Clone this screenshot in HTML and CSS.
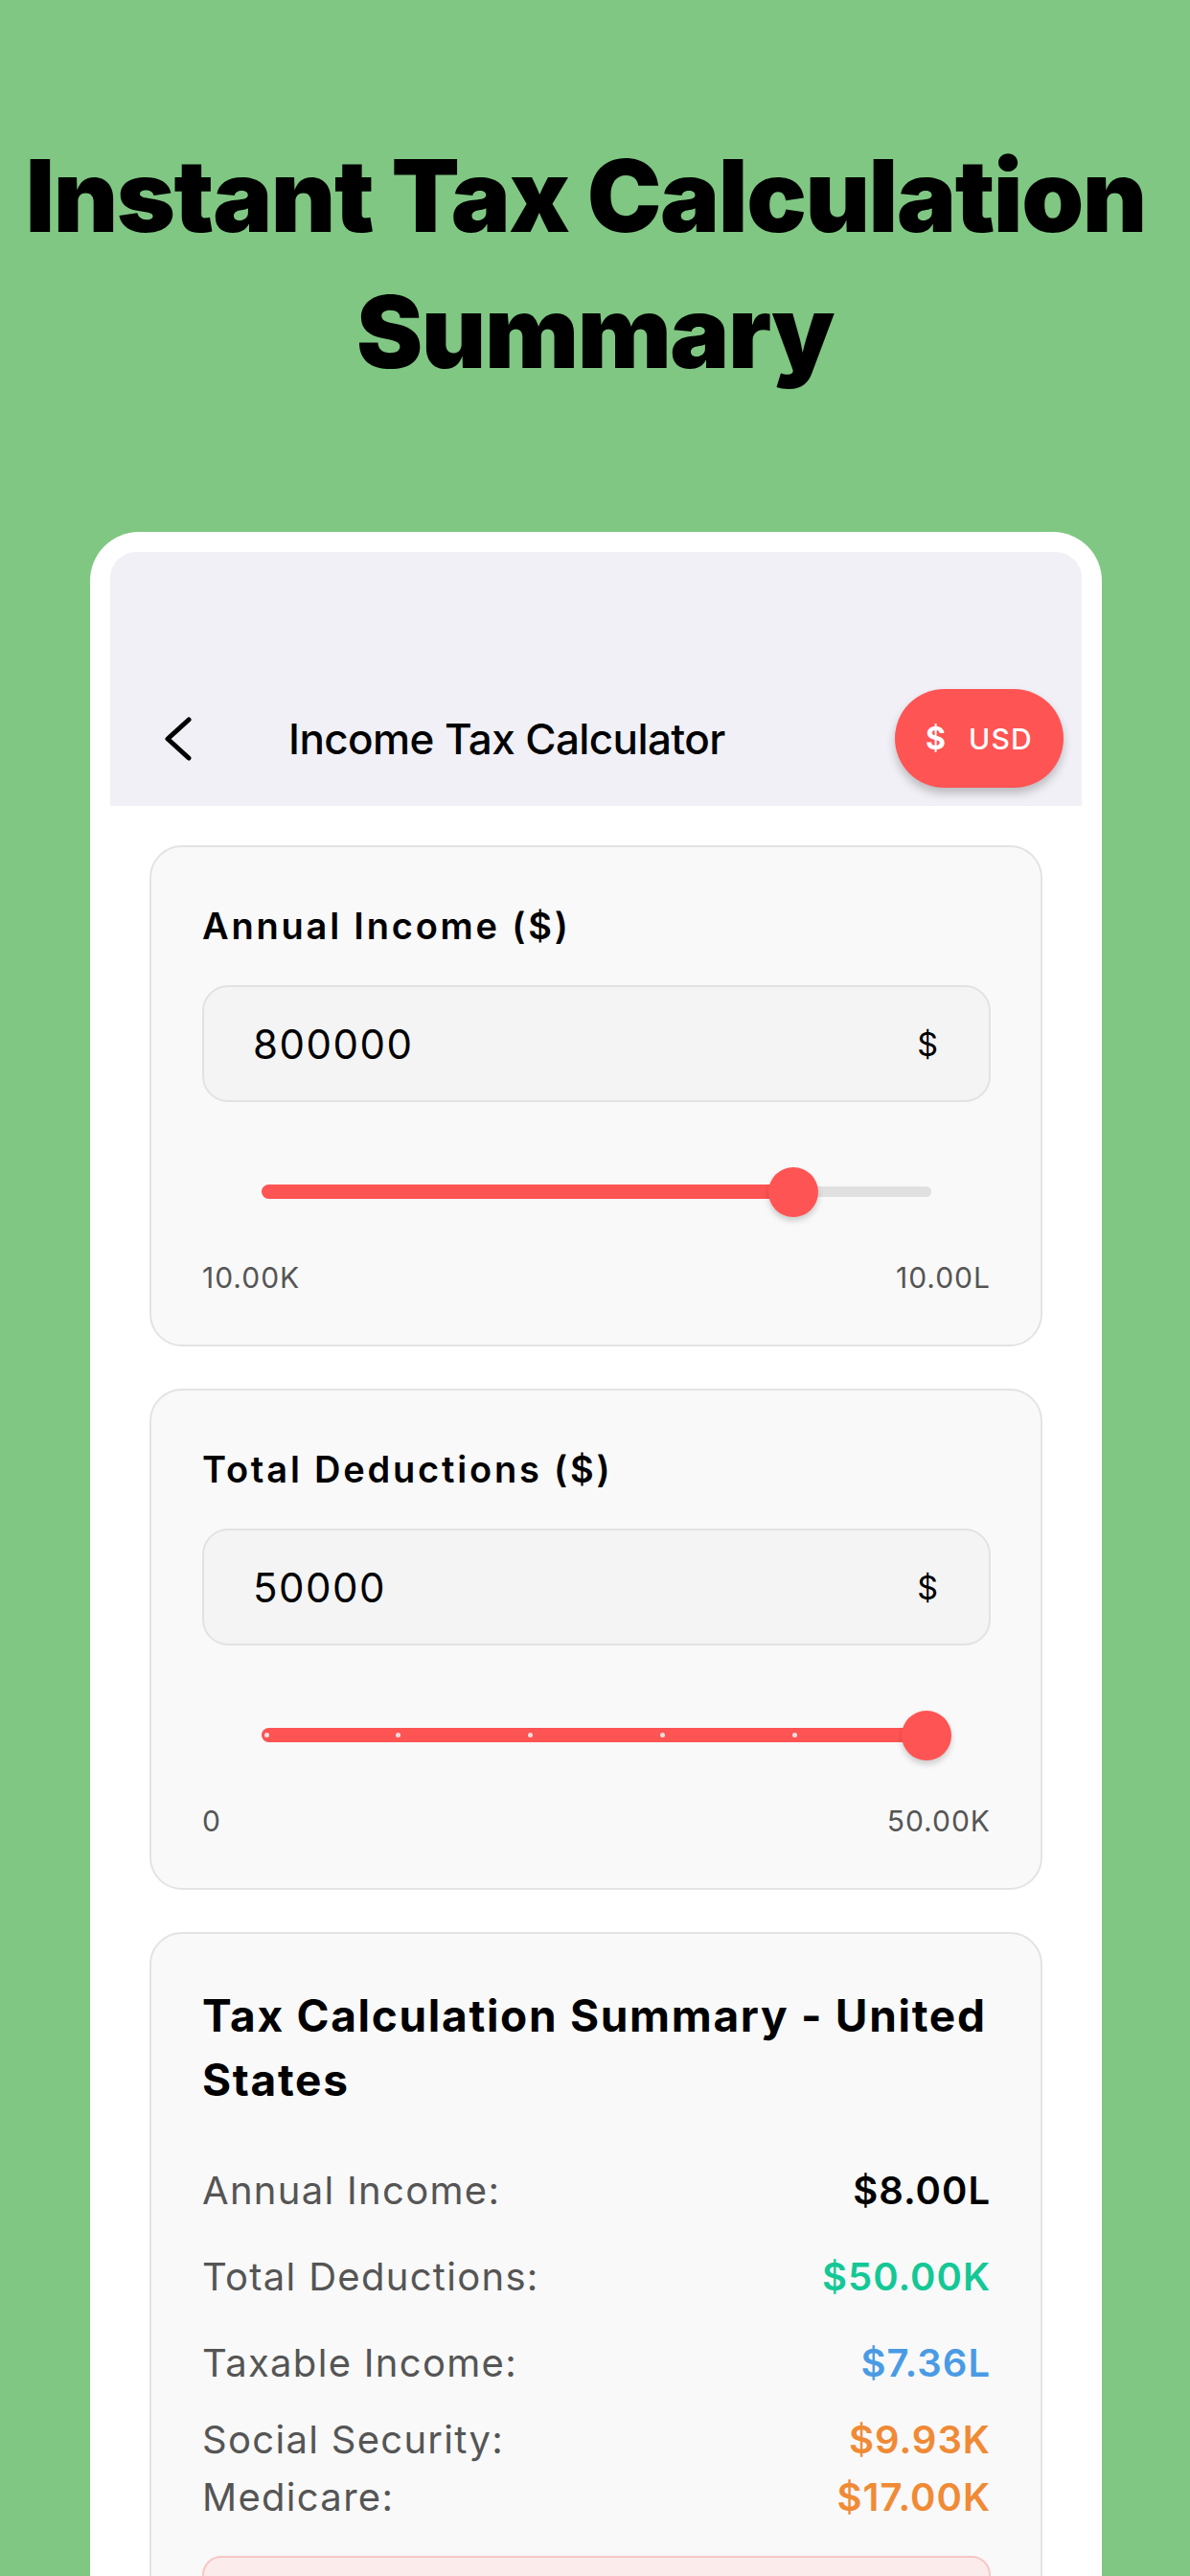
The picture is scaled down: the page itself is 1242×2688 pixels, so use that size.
FILE: index.html
```html
<!DOCTYPE html>
<html lang="en">
<head>
<meta charset="utf-8">
<title>Instant Tax Calculation Summary</title>
<link rel="stylesheet" href="styles.css">
</head>
<body>
<h1 class="headline">Instant Tax Calculation&nbsp;<br>Summary</h1>
<div class="phone">
  <div class="screen">
    <header class="appbar">
      <nav class="navrow">
        <svg class="back" viewBox="0 0 32 48" width="32" height="48" aria-hidden="true">
          <path d="M27 4 L5 24 L27 44" fill="none" stroke="#000" stroke-width="5" stroke-linecap="round" stroke-linejoin="round"/>
        </svg>
        <span class="navtitle">Income Tax Calculator</span>
        <button class="currency"><span class="cur-sym">$</span><span class="cur-code">USD</span></button>
      </nav>
    </header>
    <main class="content">
      <section class="card">
        <div class="field-label">Annual Income ($)</div>
        <div class="input"><span class="input-value">800000</span><span class="input-suffix">$</span></div>
        <div class="slider">
          <div class="track"></div>
          <div class="rail" style="--p: 79.8%">
            <div class="fill"></div>
            <div class="thumb"></div>
          </div>
        </div>
        <div class="range"><span>10.00K</span><span>10.00L</span></div>
      </section>
      <section class="card">
        <div class="field-label">Total Deductions ($)</div>
        <div class="input"><span class="input-value">50000</span><span class="input-suffix">$</span></div>
        <div class="slider">
          <div class="track"></div>
          <div class="rail" style="--p: 100%">
            <div class="fill"></div>
            <div class="ticks"><i></i><i></i><i></i><i></i><i></i><i></i></div>
            <div class="thumb"></div>
          </div>
        </div>
        <div class="range"><span>0</span><span>50.00K</span></div>
      </section>
      <section class="card summary">
        <h2 class="summary-title">Tax Calculation Summary - United States</h2>
        <div class="row row-first"><span class="row-label">Annual Income:</span><span class="row-value">$8.00L</span></div>
        <div class="row row-gap"><span class="row-label">Total Deductions:</span><span class="row-value green">$50.00K</span></div>
        <div class="row row-gap"><span class="row-label">Taxable Income:</span><span class="row-value blue">$7.36L</span></div>
        <div class="row row-gap-sm"><span class="row-label">Social Security:</span><span class="row-value orange">$9.93K</span></div>
        <div class="row"><span class="row-label">Medicare:</span><span class="row-value orange">$17.00K</span></div>
        <div class="tax-box"></div>
      </section>
    </main>
  </div>
</div>
</body>
</html>
```
FILE: styles.css
```css
* { box-sizing: border-box; }
html, body { margin: 0; padding: 0; }
body {
  width: 1242px;
  height: 2688px;
  overflow: hidden;
  background: #7fc783;
  font-family: Inter, "Noto Sans", sans-serif;
  color: #000;
}
.headline {
  margin: 0;
  padding-top: 133px;
  font-family: Inter, sans-serif;
  font-weight: 900;
  font-size: 104px;
  line-height: 142px;
  letter-spacing: -1.4px;
  text-align: center;
  color: #000;
}
.phone {
  margin: 138px 0 0 94px;
  width: 1056px;
  height: 2200px;
  background: #fff;
  border-radius: 51px 51px 0 0;
  padding: 21px 21px 0;
}
.screen { background: #fff; }
.appbar {
  height: 265px;
  background: #f0f0f6;
  border-radius: 27px 27px 0 0;
  display: flex;
  flex-direction: column;
  justify-content: flex-end;
  padding-bottom: 19px;
}
.navrow {
  display: flex;
  align-items: center;
  height: 103px;
}
.back { margin-left: 55px; flex: none; }
.navtitle {
  margin-left: 99px;
  font-size: 44px;
  font-weight: 500;
  letter-spacing: -0.6px;
}
.currency {
  margin-left: auto;
  margin-right: 19px;
  width: 176px;
  height: 103px;
  border: 0;
  border-radius: 52px;
  background: #ff5454;
  box-shadow: 0 6px 10px rgba(0,0,0,0.22);
  color: #fff;
  display: flex;
  align-items: center;
  justify-content: center;
  gap: 24px;
  font-family: Inter, sans-serif;
  padding: 0;
}
.cur-sym { font-size: 32px; font-weight: 700; }
.cur-code { font-size: 30px; font-weight: 500; letter-spacing: 1.2px; }
.content {
  padding: 41px 41px 0;
  display: flex;
  flex-direction: column;
  gap: 44px;
}
.card {
  background: #f9f9f9;
  border: 2px solid #e3e3e3;
  border-radius: 34px;
  padding: 58px 52px 52px 53px;
}
.field-label {
  font-size: 38px;
  line-height: 48px;
  font-weight: 600;
  letter-spacing: 2.8px;
}
.input {
  margin-top: 38px;
  height: 122px;
  background: #f4f4f4;
  border: 2px solid #e2e2e2;
  border-radius: 27px;
  display: flex;
  align-items: center;
  justify-content: space-between;
  padding: 0 53px 0 51px;
}
.input-value { font-size: 42px; letter-spacing: 1.5px; }
.input-suffix { font-size: 34px; }
.slider {
  position: relative;
  margin: 68px 62px 0;
  height: 52px;
}
.track {
  position: absolute;
  left: 0; right: 0; top: 20px;
  height: 11px;
  border-radius: 6px;
  background: #e0e0e0;
}
.rail {
  position: absolute;
  left: 5px; right: 5px; top: 0; bottom: 0;
}
.fill {
  position: absolute;
  left: -5px;
  top: 18px;
  height: 15px;
  width: calc(var(--p) + 5px);
  border-radius: 8px;
  background: #ff5454;
}
.ticks { position: absolute; left: 0; right: 0; top: 0; bottom: 0; }
.ticks i {
  position: absolute;
  top: 23px;
  width: 5px; height: 5px;
  margin-left: -2.5px;
  border-radius: 50%;
  background: #eedede;
}
.ticks i:nth-child(1) { left: 0; }
.ticks i:nth-child(2) { left: 20%; }
.ticks i:nth-child(3) { left: 40%; }
.ticks i:nth-child(4) { left: 60%; }
.ticks i:nth-child(5) { left: 80%; }
.ticks i:nth-child(6) { left: 100%; }
.thumb {
  position: absolute;
  top: 0;
  left: var(--p);
  width: 52px; height: 52px;
  margin-left: -26px;
  border-radius: 50%;
  background: #ff5454;
  box-shadow: 0 4px 6px rgba(0,0,0,0.18);
}
.range {
  margin-top: 45px;
  display: flex;
  justify-content: space-between;
  font-size: 30px;
  line-height: 36px;
  color: #555;
  letter-spacing: 1px;
}
.summary { padding-top: 52px; padding-bottom: 0; height: 800px; }
.summary-title {
  margin: 0;
  font-size: 46px;
  line-height: 67px;
  font-weight: 700;
  letter-spacing: 1.7px;
}
.row {
  height: 60px;
  display: flex;
  align-items: center;
  justify-content: space-between;
  font-size: 40px;
}
.row-first { margin-top: 51px; }
.row-gap { margin-top: 30px; }
.row-gap-sm { margin-top: 20px; }
.row-label { color: #555; letter-spacing: 1.3px; }
.row-value { font-weight: 600; letter-spacing: 1px; }
.green { color: #14c896; }
.blue { color: #4a9be4; }
.orange { color: #f08a35; }
.tax-box {
  margin-top: 32px;
  height: 120px;
  background: #fcebeb;
  border: 2px solid #f8c6c6;
  border-radius: 20px;
}
```
